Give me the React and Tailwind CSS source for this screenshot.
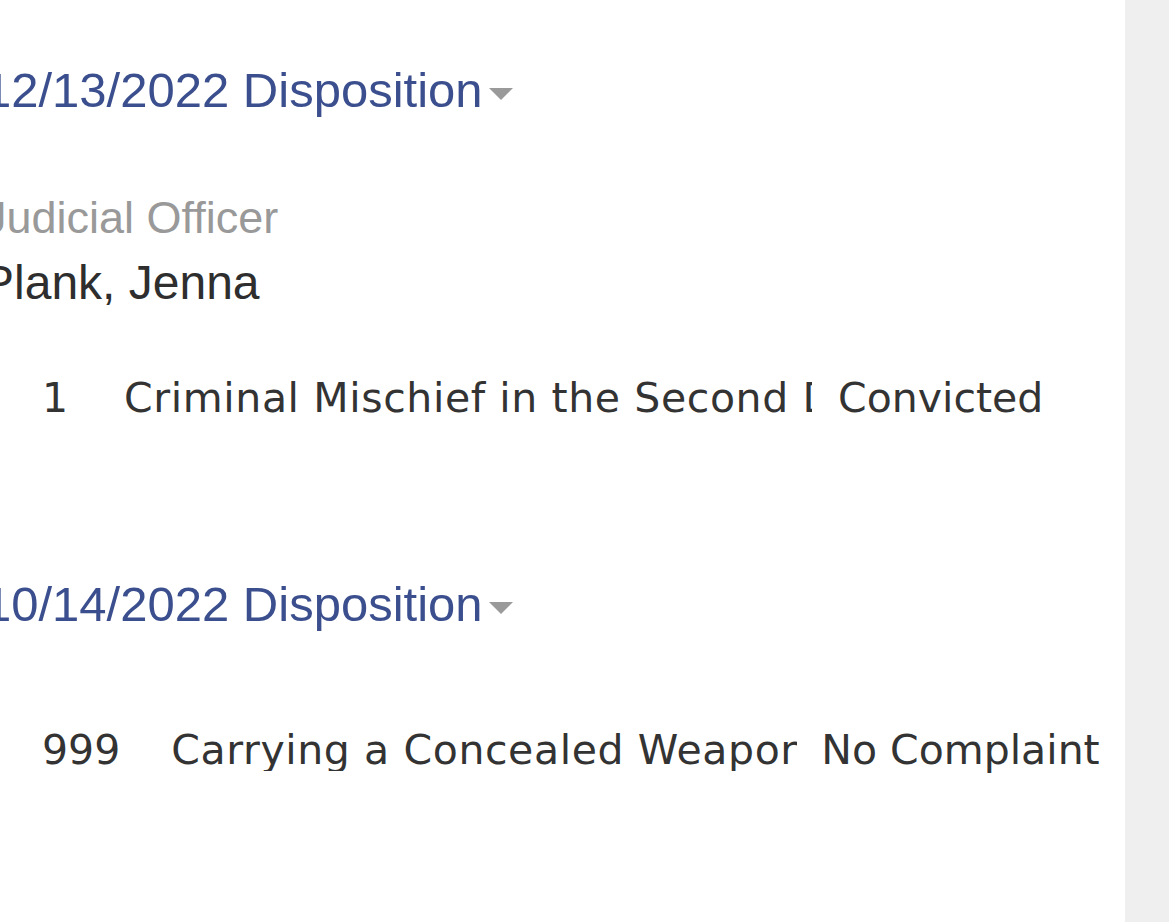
const heading = "font-['Liberation_Sans',Arial,sans-serif] text-[49px] leading-[48px] text-[#3b4f8e]";
const rowText = "font-['DejaVu_Sans',Verdana,sans-serif] text-[41px] leading-[41px] text-[#333333]";

function Caret() {
  return (
    <svg width="24" height="12" viewBox="0 0 24 12" className="ml-[6px] mt-[22px] shrink-0">
      <polygon points="0,0 24,0 12,12" fill="#9a9a9a" />
    </svg>
  );
}

function DispositionHeading({ date }) {
  return (
    <div className="flex items-start whitespace-nowrap">
      <span className={heading}>{date} Disposition</span>
      <Caret />
    </div>
  );
}

function ChargeRow({ num, numPad, desc, descWidth, gap, result }) {
  return (
    <div className={`flex whitespace-nowrap pl-[58px] ${rowText}`}>
      <span style={{ paddingRight: numPad }}>{num}</span>
      <span className="overflow-hidden shrink-0 tracking-[0.6px]" style={{ width: descWidth }}>{desc}</span>
      <span style={{ marginLeft: gap }}>{result}</span>
    </div>
  );
}

export default function App() {
  return (
    <div className="flex h-[922px] w-full overflow-hidden bg-white">
      <div className="w-[1125px] shrink-0 overflow-hidden">
        <div className="-ml-[16px] pt-[66px]">
          <DispositionHeading date="12/13/2022" />

          <div className="mt-[81px] font-['Liberation_Sans',Arial,sans-serif] text-[45px] leading-[45px] text-[#999999] whitespace-nowrap">
            Judicial Officer
          </div>
          <div className="mt-[19px] -ml-[2px] font-['Liberation_Sans',Arial,sans-serif] text-[48px] leading-[48px] text-[#2e2e2e] whitespace-nowrap">
            Plank, Jenna
          </div>

          <div className="mt-[71px]">
            <ChargeRow
              num="1"
              numPad={56}
              desc="Criminal Mischief in the Second Degree"
              descWidth={688}
              gap={26}
              result="Convicted"
            />
          </div>

          <div className="mt-[161px]">
            <DispositionHeading date="10/14/2022" />
          </div>

          <div className="mt-[102px]">
            <ChargeRow
              num="999"
              numPad={51}
              desc="Carrying a Concealed Weapon"
              descWidth={626}
              gap={24}
              result="No Complaint"
            />
          </div>
        </div>
      </div>
      <div className="flex-1 bg-[#efefef]" />
    </div>
  );
}
